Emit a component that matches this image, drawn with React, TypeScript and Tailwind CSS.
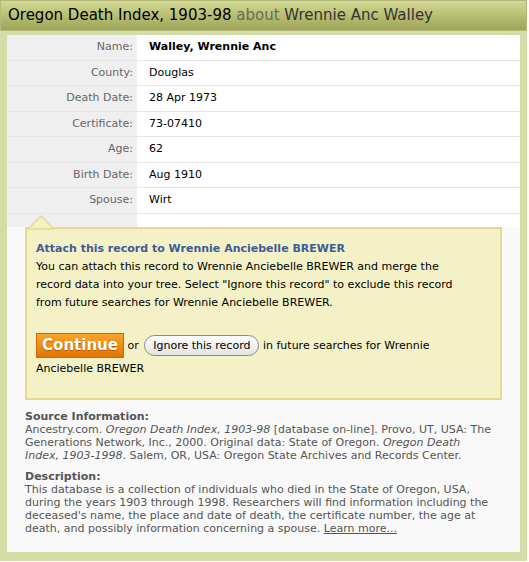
import React from "react";

const rows: { label: string; value: string; bold?: boolean }[] = [
  { label: "Name:", value: "Walley, Wrennie Anc", bold: true },
  { label: "County:", value: "Douglas" },
  { label: "Death Date:", value: "28 Apr 1973" },
  { label: "Certificate:", value: "73-07410" },
  { label: "Age:", value: "62" },
  { label: "Birth Date:", value: "Aug 1910" },
  { label: "Spouse:", value: "Wirt" },
];

function RecordTable() {
  return (
    <div className="flex flex-col">
      {rows.map((row) => (
        <div key={row.label} className="flex h-[25.5px] border-b border-[#e6e6e6]">
          <div className="w-[130px] shrink-0 bg-[#efefef] pr-[4px] text-right leading-[24.5px] text-[#666]">
            {row.label}
          </div>
          <div
            className={`flex-1 pl-[12px] leading-[24.5px] text-black ${row.bold ? "font-bold" : ""}`}
          >
            {row.value}
          </div>
        </div>
      ))}
      <div className="flex h-[13px]">
        <div className="w-[130px] shrink-0 bg-[#efefef]" />
      </div>
    </div>
  );
}

function AttachBox() {
  return (
    <div className="relative mx-[18px] border-2 border-[#e9d98f] bg-[#f4f1c6] pb-[18px] pl-[9px] pr-[38px] pt-[11px] leading-[18px]">
      <svg
        className="absolute left-[0px] top-[-14px]"
        width="28"
        height="15"
        viewBox="0 0 28 15"
      >
        <polygon points="1,14 14,1 27,14" fill="#f4f1c6" stroke="#e9d98f" strokeWidth="1.5" />
      </svg>
      <div className="font-bold text-[#3d5c98]">Attach this record to Wrennie Anciebelle BREWER</div>
      <p className="text-black">
        You can attach this record to Wrennie Anciebelle BREWER and merge the record data into
        your tree. Select "Ignore this record" to exclude this record from future searches for
        Wrennie Anciebelle BREWER.
      </p>
      <div className="mt-[21px] leading-[22px] text-black">
        <span className="inline-block h-[25px] w-[88px] bg-gradient-to-b from-[#fba72a] to-[#e07300] text-center align-middle text-[15px] font-bold leading-[25px] text-white shadow-[inset_0_0_0_1px_#d06a00] [text-shadow:0_1px_1px_#b35a00]">
          Continue
        </span>{" "}
        or{" "}
        <span className="ml-[2px] inline-block h-[21px] rounded-full border border-[#8a8a8a] bg-gradient-to-b from-white to-[#e4e4e4] px-[8px] align-middle leading-[19px] text-black">
          Ignore this record
        </span>{" "}
        in future searches for Wrennie Anciebelle BREWER
      </div>
    </div>
  );
}

export default function App() {
  return (
    <div
      className="h-[561px] w-[527px] bg-[#d6dca7] text-[11px]"
      style={{ fontFamily: '"DejaVu Sans", Verdana, sans-serif' }}
    >
      <div className="h-[31px] border border-[#b3b97a] bg-gradient-to-b from-[#d3d991] to-[#9da558] pl-[7px] text-[15px] leading-[29px] whitespace-nowrap">
        <span className="text-black">Oregon Death Index, 1903-98 </span>
        <span className="text-[#6b6b5a]">about</span>
        <span className="text-[#333]"> Wrennie Anc Walley</span>
      </div>
      <div className="mx-[7px] mt-[4px] h-[517px] bg-[#f9f9f9]">
        <div className="bg-white">
          <RecordTable />
        </div>
        <AttachBox />
        <div className="pl-[18px] pr-[26px] pt-[10px] leading-[13px] text-[#555]">
          <div className="font-bold">Source Information:</div>
          <div>
            Ancestry.com. <i>Oregon Death Index, 1903-98</i> [database on-line]. Provo, UT, USA:
            The Generations Network, Inc., 2000. Original data: State of Oregon.{" "}
            <i>Oregon Death Index, 1903-1998</i>. Salem, OR, USA: Oregon State Archives and
            Records Center.
          </div>
          <div className="mt-[8px] font-bold">Description:</div>
          <div>
            This database is a collection of individuals who died in the State of Oregon, USA,
            during the years 1903 through 1998. Researchers will find information including the
            deceased's name, the place and date of death, the certificate number, the age at
            death, and possibly information concerning a spouse.{" "}
            <a className="underline">Learn more...</a>
          </div>
        </div>
      </div>
    </div>
  );
}
